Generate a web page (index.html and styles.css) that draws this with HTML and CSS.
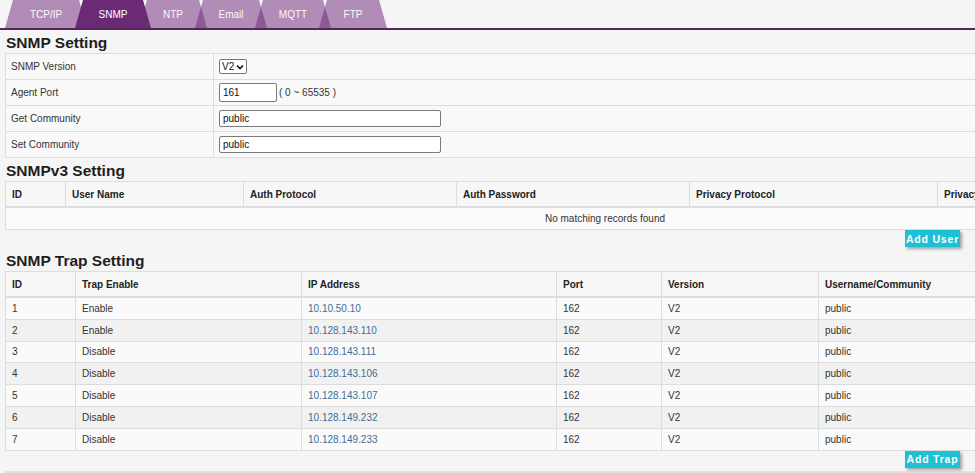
FILE: index.html
```html
<!DOCTYPE html>
<html>
<head>
<meta charset="utf-8">
<link rel="stylesheet" href="styles.css">
</head>
<body>
<div class="tabs">
  <div class="tab tab-tcp">TCP/IP</div>
  <div class="tab tab-snmp active">SNMP</div>
  <div class="tab tab-ntp">NTP</div>
  <div class="tab tab-email">Email</div>
  <div class="tab tab-mqtt">MQTT</div>
  <div class="tab tab-ftp">FTP</div>
</div>

<h2 class="section-title first">SNMP Setting</h2>
<table class="tbl setting-tbl">
  <tr><td class="label-cell">SNMP Version</td><td class="value-cell"><span class="sel-wrap"><select class="sel"><option>V2</option></select><svg class="chev" width="8" height="6" viewBox="0 0 8 6"><path d="M1 1.5 L4 4.5 L7 1.5" fill="none" stroke="#111" stroke-width="1.6"/></svg></span></td></tr>
  <tr><td class="label-cell">Agent Port</td><td class="value-cell"><input class="inp inp-port" type="text" value="161"><span class="range">( 0 ~ 65535 )</span></td></tr>
  <tr><td class="label-cell">Get Community</td><td class="value-cell"><input class="inp inp-long" type="text" value="public"></td></tr>
  <tr><td class="label-cell">Set Community</td><td class="value-cell"><input class="inp inp-long" type="text" value="public"></td></tr>
</table>

<h2 class="section-title">SNMPv3 Setting</h2>
<table class="tbl v3-tbl">
  <thead>
    <tr><th class="c-id">ID</th><th class="c-user">User Name</th><th class="c-ap">Auth Protocol</th><th class="c-apw">Auth Password</th><th class="c-pp">Privacy Protocol</th><th class="c-ppw">Privacy Password</th></tr>
  </thead>
  <tbody>
    <tr><td class="empty" colspan="6">No matching records found</td></tr>
  </tbody>
</table>
<div class="btn-row"><button class="btn">Add User</button></div>

<h2 class="section-title">SNMP Trap Setting</h2>
<table class="tbl trap-tbl">
  <thead>
    <tr><th class="t-id">ID</th><th class="t-en">Trap Enable</th><th class="t-ip">IP Address</th><th class="t-port">Port</th><th class="t-ver">Version</th><th class="t-user">Username/Community</th></tr>
  </thead>
  <tbody>
    <tr><td>1</td><td>Enable</td><td class="ip">10.10.50.10</td><td>162</td><td>V2</td><td>public</td></tr>
    <tr><td>2</td><td>Enable</td><td class="ip">10.128.143.110</td><td>162</td><td>V2</td><td>public</td></tr>
    <tr><td>3</td><td>Disable</td><td class="ip">10.128.143.111</td><td>162</td><td>V2</td><td>public</td></tr>
    <tr><td>4</td><td>Disable</td><td class="ip">10.128.143.106</td><td>162</td><td>V2</td><td>public</td></tr>
    <tr><td>5</td><td>Disable</td><td class="ip">10.128.143.107</td><td>162</td><td>V2</td><td>public</td></tr>
    <tr><td>6</td><td>Disable</td><td class="ip">10.128.149.232</td><td>162</td><td>V2</td><td>public</td></tr>
    <tr><td>7</td><td>Disable</td><td class="ip">10.128.149.233</td><td>162</td><td>V2</td><td>public</td></tr>
  </tbody>
</table>
<div class="btn-row"><button class="btn">Add Trap</button></div>
<div class="next-box"></div>
</body>
</html>
```
FILE: styles.css
```css
html, body {
  margin: 0;
  padding: 0;
  overflow: hidden;
}
body {
  background: #f5f5f5;
  font-family: "Liberation Sans", Arial, sans-serif;
  font-size: 10px;
  color: #333;
}

/* tabs */
.tabs {
  display: flex;
  height: 28px;
  padding-left: 5px;
  border-bottom: 2px solid #55265b;
}
.tab {
  height: 28px;
  display: flex;
  align-items: center;
  justify-content: center;
  color: #fdf9fd;
  font-size: 10px;
  background: rgba(110, 39, 121, 0.51);
  clip-path: polygon(8px 0, calc(100% - 8px) 0, 100% 100%, 0 100%);
  margin-left: -12px;
}
.tab:first-child { margin-left: 0; }
.tab.active {
  background: #6b2a76;
  color: #fff;
  z-index: 1;
}
.tab-tcp { width: 82px; }
.tab-snmp { width: 76px; }
.tab-ntp { width: 68px; }
.tab-email { width: 72px; }
.tab-mqtt { width: 76px; }
.tab-ftp { width: 68px; }

/* headings */
.section-title {
  margin: 0;
  padding: 3px 0 0 6px;
  height: 20px;
  line-height: 20px;
  font-size: 15.5px;
  font-weight: bold;
  color: #1e1e1e;
}

/* tables */
.tbl {
  border-collapse: collapse;
  margin-left: 5px;
  background: #f9f9f9;
}
.tbl td, .tbl th {
  border: 1px solid #dddddd;
  padding: 0 6px;
  text-align: left;
  vertical-align: middle;
  white-space: nowrap;
}
.tbl th {
  font-weight: bold;
  color: #222;
  height: 24px;
  border-bottom: 2px solid #dddddd;
  background: #f7f7f7;
}

.setting-tbl { width: 1200px; }
.setting-tbl td { height: 25px; padding: 0 5px; }
.label-cell { width: 197px; }
.value-cell { padding-left: 5px; }

.sel-wrap {
  position: relative;
  display: inline-block;
  vertical-align: middle;
  line-height: 0;
}
.sel {
  -webkit-appearance: none;
  appearance: none;
  box-sizing: border-box;
  height: 15px;
  width: 28px;
  font-family: "Liberation Sans", Arial, sans-serif;
  font-size: 10px;
  padding: 0 0 0 2px;
  border: 1px solid #767676;
  border-radius: 2px;
  background: #fff;
  color: #111;
  margin: 0;
}
.chev {
  position: absolute;
  right: 3px;
  top: 5px;
  pointer-events: none;
}
.inp {
  box-sizing: border-box;
  height: 17px;
  font-family: "Liberation Sans", Arial, sans-serif;
  font-size: 10px;
  padding: 0 3px;
  border: 1px solid #7a7a7a;
  border-radius: 2px;
  background: #fff;
  color: #111;
  vertical-align: middle;
  margin: 0;
}
.inp-port { width: 58px; height: 19px; }
.inp-long { width: 222px; }
.range { margin-left: 2px; vertical-align: middle; }

.v3-tbl { width: 1200px; }
.v3-tbl td { height: 21px; }
.c-id { width: 47px; }
.c-user { width: 165px; }
.c-ap { width: 200px; }
.c-apw { width: 220px; }
.c-pp { width: 235px; }
.empty { text-align: center !important; background: #fbfbfb; }

.trap-tbl { width: 1000px; }
.trap-tbl td { height: 20.8px; }
.trap-tbl tbody tr:nth-child(odd) td { background: #fafafa; }
.trap-tbl tbody tr:nth-child(even) td { background: #f1f1f1; }
.t-id { width: 57px; }
.t-en { width: 213px; }
.t-ip { width: 242px; }
.t-port { width: 92px; }
.t-ver { width: 144px; }
.ip { color: #3f6f98; }

/* buttons */
.btn-row {
  display: flex;
  justify-content: flex-end;
  padding-right: 15px;
  height: 18px;
  align-items: flex-start;
}
.btn {
  margin-top: 0;
  height: 17px;
  width: 55px;
  padding: 0;
  border: none;
  background: #1ec0d3;
  color: #fff;
  font-family: "Liberation Sans", Arial, sans-serif;
  font-weight: bold;
  font-size: 10.5px;
  letter-spacing: 0.8px;
  box-shadow: 2px 2px 3px rgba(0, 0, 0, 0.35);
}

.next-box {
  margin: 2px 0 0 5px;
  border-top: 2px solid #e2e2e2;
  height: 10px;
}
```
